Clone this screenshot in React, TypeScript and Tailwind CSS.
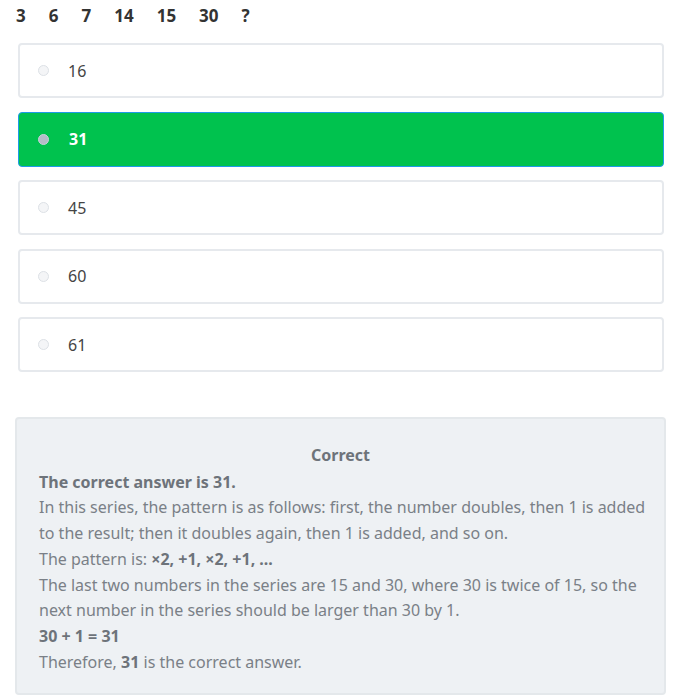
import React from "react";

const nums = ["3", "6", "7", "14", "15", "30", "?"];
const options = ["16", "31", "45", "60", "61"];

export default function App() {
  return (
    <div className="w-[678px] h-[700px] bg-white text-[#333] overflow-hidden" style={{ fontFamily: '"Noto Sans", "Open Sans", sans-serif' }}>
      <div className="flex gap-[23px] pl-[16px] pt-[5px] h-[26px] items-center font-bold text-[17px] text-[#333]">
        {nums.map((n, i) => (
          <span key={i}>{n}</span>
        ))}
      </div>
      <div className="flex flex-col gap-[13.5px] pl-[18px] pt-[17px] w-[664px]">
        {options.map((o) => {
          const sel = o === "31";
          return (
            <div
              key={o}
              className={
                sel
                  ? "h-[55px] flex items-center rounded-[4px] border border-[#1e9be9] bg-[#00c24e] text-white font-bold"
                  : "h-[55px] flex items-center rounded-[4px] border-2 border-[#e6e9ed] bg-white text-[#444]"
              }
            >
              <span
                className={
                  sel
                    ? "ml-[19px] w-[11px] h-[11px] rounded-full bg-[#b4bcc8] border border-[#c9d0da]"
                    : "ml-[18px] w-[11px] h-[11px] rounded-full bg-[#f4f5f7] border border-[#dde1e6]"
                }
              />
              <span className={sel ? "ml-[20px] text-[16px]" : "ml-[19px] text-[16px]"}>{o}</span>
            </div>
          );
        })}
      </div>
      <div className="ml-[15px] mt-[45px] w-[651px] h-[278px] rounded-[4px] border-2 border-[#e4e8eb] bg-[#eef1f4] pl-[22px] pr-[10px] pt-[24px] text-[16px] leading-[25.7px] text-[#7a8087]">
        <div className="text-center font-bold text-[#6d737a] mb-[1px] pr-[12px]">Correct</div>
        <div className="font-bold text-[#6d737a]">The correct answer is 31.</div>
        <div>In this series, the pattern is as follows: first, the number doubles, then 1 is added to the result; then it doubles again, then 1 is added, and so on.</div>
        <div>
          The pattern is: <b className="text-[#6d737a]">×2, +1, ×2, +1, ...</b>
        </div>
        <div>The last two numbers in the series are 15 and 30, where 30 is twice of 15, so the next number in the series should be larger than 30 by 1.</div>
        <div className="font-bold text-[#6d737a]">30 + 1 = 31</div>
        <div>
          Therefore, <b className="text-[#6d737a]">31</b> is the correct answer.
        </div>
      </div>
    </div>
  );
}
